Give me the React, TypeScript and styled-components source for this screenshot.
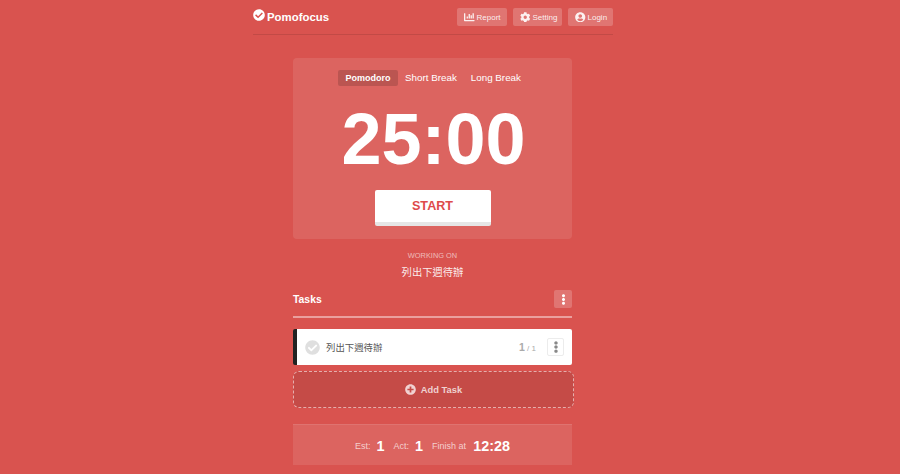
import React from 'react';
import styled, { createGlobalStyle } from 'styled-components';
import { FaChartBar, FaCog, FaUserCircle, FaCheckCircle, FaPlusCircle, FaEllipsisV } from 'react-icons/fa';

const GlobalStyle = createGlobalStyle`
  html, body {
    margin: 0;
    height: 474px;
    overflow: hidden;
    background: #d9534f;
    font-family: "Liberation Sans", "Noto Sans CJK TC", sans-serif;
    color: #fff;
  }
`;

const Page = styled.div`
  width: 360px;
  margin: 0 auto 0 253px;
`;

const Header = styled.header`
  height: 34px;
  display: flex;
  justify-content: space-between;
  align-items: flex-start;
  border-bottom: 1px solid rgba(0, 0, 0, 0.1);
`;

const Logo = styled.div`
  display: flex;
  align-items: flex-start;
  gap: 2px;
  padding-top: 9px;
  font-size: 11.4px;
  font-weight: 700;
  line-height: 16px;
  svg { font-size: 12px; }
`;

const HeaderNav = styled.nav`
  display: flex;
  gap: 6px;
  padding-top: 8px;
`;

const NavButton = styled.div<{ $width: number }>`
  width: ${({ $width }) => $width}px;
  height: 18px;
  box-sizing: border-box;
  padding-left: 7px;
  display: flex;
  align-items: center;
  gap: 2px;
  border-radius: 2px;
  background: rgba(255, 255, 255, 0.2);
  font-size: 8px;
  color: rgba(255, 255, 255, 0.9);
  svg { font-size: 10.5px; }
`;

const Column = styled.main`
  width: 279px;
  margin: 23px 0 0 40px;
`;

const TimerCard = styled.section`
  height: 181px;
  box-sizing: border-box;
  padding-top: 12px;
  border-radius: 4px;
  background: rgba(255, 255, 255, 0.1);
  display: flex;
  flex-direction: column;
  align-items: center;
`;

const Modes = styled.div`
  display: flex;
  align-items: center;
  height: 16px;
  margin-left: 1px;
`;

const Mode = styled.div<{ $active?: boolean }>`
  height: 16px;
  line-height: 16px;
  padding: 0 ${({ $active }) => ($active ? 7.5 : 7)}px;
  border-radius: 2px;
  font-size: ${({ $active }) => ($active ? 9 : 9.8)}px;
  font-weight: ${({ $active }) => ($active ? 700 : 400)};
  background: ${({ $active }) => ($active ? 'rgba(0, 0, 0, 0.15)' : 'transparent')};
`;

const Clock = styled.div`
  margin-top: 11px;
  padding-left: 2px;
  font-size: 72px;
  line-height: 84px;
  font-weight: 700;
`;

const StartButton = styled.div`
  margin-top: 9px;
  width: 116px;
  height: 32px;
  box-sizing: content-box;
  border-bottom: 4px solid #e6e6e6;
  border-radius: 2px;
  background: #fff;
  color: #de4b4b;
  font-size: 12.6px;
  font-weight: 700;
  line-height: 32px;
  text-align: center;
`;

const Working = styled.div`
  margin-top: 12px;
  text-align: center;
`;

const WorkingLabel = styled.div`
  font-size: 7.4px;
  line-height: 9px;
  color: rgba(255, 255, 255, 0.6);
`;

const WorkingTask = styled.div`
  margin-top: 6px;
  font-size: 10.3px;
  line-height: 14px;
  color: rgba(255, 255, 255, 0.9);
`;

const TasksHeader = styled.div`
  margin-top: 5px;
  height: 28px;
  padding-bottom: 3px;
  display: flex;
  justify-content: space-between;
  align-items: center;
  border-bottom: 2px solid rgba(255, 255, 255, 0.45);
  box-sizing: content-box;
`;

const TasksTitle = styled.div`
  font-size: 10.4px;
  font-weight: 700;
`;

const MenuButton = styled.div`
  width: 18px;
  height: 18px;
  display: flex;
  align-items: center;
  justify-content: center;
  border-radius: 2px;
  background: rgba(255, 255, 255, 0.2);
  font-size: 11px;
`;

const TaskRow = styled.div`
  margin-top: 11px;
  height: 36px;
  box-sizing: border-box;
  display: flex;
  align-items: center;
  padding: 0 8px;
  border-left: 4px solid #222;
  border-radius: 2px;
  background: #fff;
  color: #555;
`;

const CheckIcon = styled.span`
  display: flex;
  font-size: 15px;
  color: #dfdfdf;
`;

const TaskName = styled.div`
  margin-left: 6px;
  flex: 1;
  font-size: 9.4px;
`;

const Count = styled.div`
  font-size: 8px;
  color: #aaa;
  margin-right: 11px;
`;

const CountDone = styled.span`
  font-size: 10.5px;
  font-weight: 700;
`;

const TaskMenu = styled.div`
  width: 17px;
  height: 18px;
  box-sizing: border-box;
  display: flex;
  align-items: center;
  justify-content: center;
  border: 1px solid #ececec;
  border-radius: 2px;
  color: #888;
  font-size: 12px;
`;

const AddTask = styled.div`
  margin-top: 6px;
  width: 281px;
  height: 37px;
  box-sizing: border-box;
  display: flex;
  align-items: center;
  justify-content: center;
  gap: 5px;
  border: 1px dashed rgba(255, 255, 255, 0.55);
  border-radius: 6px;
  background: rgba(0, 0, 0, 0.09);
  color: rgba(255, 255, 255, 0.75);
  font-size: 9.4px;
  font-weight: 700;
  svg { font-size: 11px; }
`;

const Summary = styled.div`
  margin-top: 16px;
  height: 41px;
  box-sizing: border-box;
  padding-top: 2px;
  display: flex;
  align-items: center;
  justify-content: center;
  border-top: 1px solid rgba(255, 255, 255, 0.1);
  background: rgba(255, 255, 255, 0.1);
  color: rgba(255, 255, 255, 0.7);
  font-size: 9px;
`;

const SummaryValue = styled.span<{ $wide?: boolean }>`
  margin: 0 ${({ $wide }) => ($wide ? 0 : 9)}px 0 ${({ $wide }) => ($wide ? 7 : 6)}px;
  color: #fff;
  font-size: 14.4px;
  font-weight: 700;
`;

export default function App() {
  return (
    <Page>
      <GlobalStyle />
      <Header>
        <Logo><FaCheckCircle />Pomofocus</Logo>
        <HeaderNav>
          <NavButton $width={50}><FaChartBar />Report</NavButton>
          <NavButton $width={49}><FaCog />Setting</NavButton>
          <NavButton $width={45}><FaUserCircle />Login</NavButton>
        </HeaderNav>
      </Header>
      <Column>
        <TimerCard>
          <Modes>
            <Mode $active>Pomodoro</Mode>
            <Mode>Short Break</Mode>
            <Mode>Long Break</Mode>
          </Modes>
          <Clock>25:00</Clock>
          <StartButton>START</StartButton>
        </TimerCard>
        <Working>
          <WorkingLabel>WORKING ON</WorkingLabel>
          <WorkingTask>列出下週待辦</WorkingTask>
        </Working>
        <TasksHeader>
          <TasksTitle>Tasks</TasksTitle>
          <MenuButton><FaEllipsisV /></MenuButton>
        </TasksHeader>
        <TaskRow>
          <CheckIcon><FaCheckCircle /></CheckIcon>
          <TaskName>列出下週待辦</TaskName>
          <Count><CountDone>1</CountDone> / 1</Count>
          <TaskMenu><FaEllipsisV /></TaskMenu>
        </TaskRow>
        <AddTask><FaPlusCircle />Add Task</AddTask>
        <Summary>
          Est: <SummaryValue>1</SummaryValue>
          Act: <SummaryValue>1</SummaryValue>
          Finish at <SummaryValue $wide>12:28</SummaryValue>
        </Summary>
      </Column>
    </Page>
  );
}
